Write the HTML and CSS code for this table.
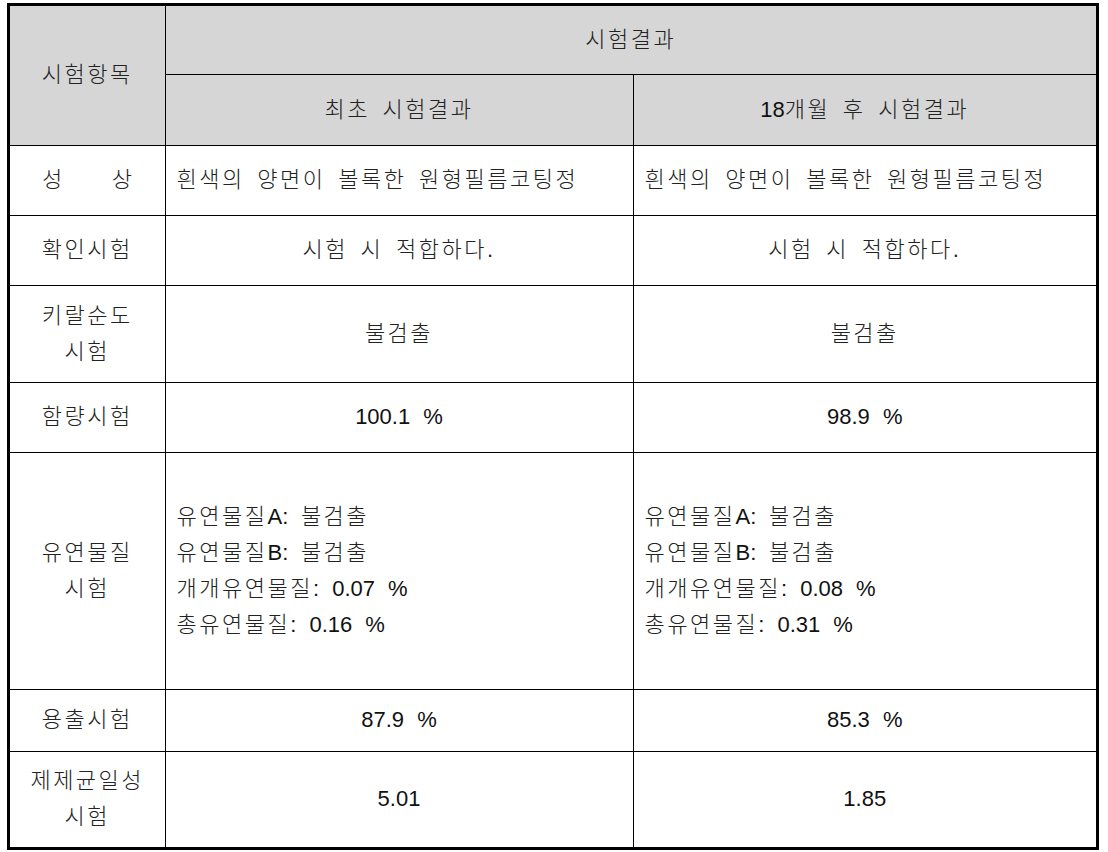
FILE: index.html
```html
<!DOCTYPE html>
<html lang="ko">
<head>
<meta charset="utf-8">
<title>시험결과</title>
<link rel="stylesheet" href="styles.css">
</head>
<body>
<div class="frame">
<table class="results">
  <colgroup>
    <col class="c1"><col class="c2"><col class="c3">
  </colgroup>
  <tr class="r1">
    <th rowspan="2" class="head">시험항목</th>
    <th colspan="2" class="head">시험결과</th>
  </tr>
  <tr class="r2">
    <th class="head">최초 시험결과</th>
    <th class="head"><span class="lat">18</span>개월 후 시험결과</th>
  </tr>
  <tr class="r3">
    <td class="label"><div class="spread"><span>성</span><span>상</span></div></td>
    <td class="left">흰색의 양면이 볼록한 원형필름코팅정</td>
    <td class="left">흰색의 양면이 볼록한 원형필름코팅정</td>
  </tr>
  <tr class="r4">
    <td class="label">확인시험</td>
    <td>시험 시 적합하다.</td>
    <td>시험 시 적합하다.</td>
  </tr>
  <tr class="r5">
    <td class="label">키랄순도<br>시험</td>
    <td>불검출</td>
    <td>불검출</td>
  </tr>
  <tr class="r6">
    <td class="label">함량시험</td>
    <td><span class="lat">100.1 %</span></td>
    <td><span class="lat">98.9 %</span></td>
  </tr>
  <tr class="r7">
    <td class="label">유연물질<br>시험</td>
    <td class="left list">유연물질<span class="lat">A:</span> 불검출<br>유연물질<span class="lat">B:</span> 불검출<br>개개유연물질<span class="lat">: 0.07 %</span><br>총유연물질<span class="lat">: 0.16 %</span></td>
    <td class="left list">유연물질<span class="lat">A:</span> 불검출<br>유연물질<span class="lat">B:</span> 불검출<br>개개유연물질<span class="lat">: 0.08 %</span><br>총유연물질<span class="lat">: 0.31 %</span></td>
  </tr>
  <tr class="r8">
    <td class="label">용출시험</td>
    <td><span class="lat">87.9 %</span></td>
    <td><span class="lat">85.3 %</span></td>
  </tr>
  <tr class="r9">
    <td class="label">제제균일성<br>시험</td>
    <td><span class="lat">5.01</span></td>
    <td><span class="lat">1.85</span></td>
  </tr>
</table>
</div>
</body>
</html>
```
FILE: styles.css
```css
html, body {
  margin: 0;
  padding: 0;
  background: #ffffff;
}
.frame {
  margin: 3px 0 0 7px;
  width: 1092px;
  border: 3px solid #000;
  box-sizing: border-box;
}
.results {
  width: 1086px;
  border-collapse: collapse;
  border-style: hidden;
  table-layout: fixed;
  font-family: "Liberation Sans", "Noto Sans CJK KR", sans-serif;
  font-size: 22px;
  font-weight: 300;
  color: #222;
  letter-spacing: 2.5px;
  word-spacing: 4px;
}
.c1 { width: 155px; }
.c2 { width: 468px; }
.c3 { width: 463px; }
.results th,
.results td {
  border: 1px solid #000;
  padding: 0;
  text-align: center;
  vertical-align: middle;
  line-height: 36px;
  font-weight: 300;
}
.head { background: #d6d6d6; }
.left {
  text-align: left !important;
  padding-left: 11px !important;
}
.lat {
  font-size: 22px;
  letter-spacing: 0;
  word-spacing: 7px;
  color: #111;
}
.spread {
  display: flex;
  justify-content: space-between;
  padding: 0 30px 0 32px;
}
.r1 { height: 68px; }
.r2 { height: 71px; }
.r3 { height: 70px; }
.r4 { height: 70px; }
.r5 { height: 97px; }
.r6 { height: 70px; }
.r7 { height: 237px; }
.r8 { height: 62px; }
.r9 { height: 96px; }
```
